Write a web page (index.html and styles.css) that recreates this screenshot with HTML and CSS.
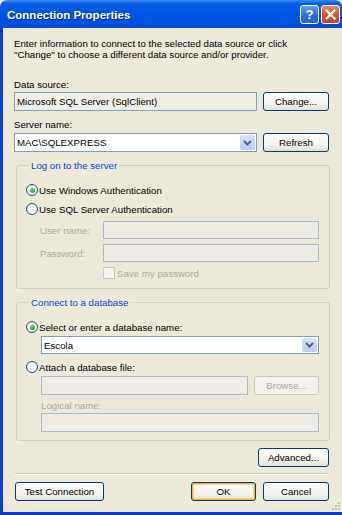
FILE: index.html
```html
<!DOCTYPE html>
<html lang="en">
<head>
    <meta charset="UTF-8">
    <title>Connection Properties</title>
    <link rel="stylesheet" href="styles.css">
</head>
<body>
    <div class="window">
        <div class="titlebar">
            <span class="title">Connection Properties</span>
            <div class="caption-buttons">
                <span class="cap-btn help">?</span>
                <span class="cap-btn close">
                    <svg width="11" height="11" viewBox="0 0 11 11"><path d="M1.5 1.5 L9.5 9.5 M9.5 1.5 L1.5 9.5" stroke="#fff" stroke-width="2.2" stroke-linecap="square"/></svg>
                </span>
            </div>
        </div>

        <div class="client">
            <p class="intro">Enter information to connect to the selected data source or click<br>"Change" to choose a different data source and/or provider.</p>

            <div class="label first">Data source:</div>
            <div class="row">
                <div class="textbox readonly">Microsoft SQL Server (SqlClient)</div>
                <button class="btn side">Change...</button>
            </div>

            <div class="label">Server name:</div>
            <div class="row">
                <div class="textbox combo">
                    <span class="value">MAC\SQLEXPRESS</span>
                    <span class="drop"><svg width="9" height="6" viewBox="0 0 9 6"><path d="M1 1 L4.5 4.5 L8 1" fill="none" stroke="#4d6185" stroke-width="2"/></svg></span>
                </div>
                <button class="btn side">Refresh</button>
            </div>

            <fieldset class="group logon">
                <legend>Log on to the server</legend>
                <div class="option">
                    <span class="radio checked"></span>
                    <span>Use Windows Authentication</span>
                </div>
                <div class="option second">
                    <span class="radio"></span>
                    <span>Use SQL Server Authentication</span>
                </div>
                <div class="field">
                    <span class="field-label disabled">User name:</span>
                    <div class="textbox disabled-box"></div>
                </div>
                <div class="field">
                    <span class="field-label disabled">Password:</span>
                    <div class="textbox disabled-box"></div>
                </div>
                <div class="check-row">
                    <span class="checkbox"></span>
                    <span class="disabled">Save my password</span>
                </div>
            </fieldset>

            <fieldset class="group database">
                <legend>Connect to a database</legend>
                <div class="option">
                    <span class="radio checked"></span>
                    <span>Select or enter a database name:</span>
                </div>
                <div class="indent">
                    <div class="textbox combo small">
                        <span class="value">Escola</span>
                        <span class="drop"><svg width="9" height="6" viewBox="0 0 9 6"><path d="M1 1 L4.5 4.5 L8 1" fill="none" stroke="#4d6185" stroke-width="2"/></svg></span>
                    </div>
                </div>
                <div class="option attach">
                    <span class="radio"></span>
                    <span>Attach a database file:</span>
                </div>
                <div class="indent row file-row">
                    <div class="textbox disabled-box"></div>
                    <button class="btn browse" disabled>Browse...</button>
                </div>
                <div class="indent logical disabled">Logical name:</div>
                <div class="indent logical-box">
                    <div class="textbox disabled-box"></div>
                </div>
            </fieldset>

            <div class="advanced-row">
                <button class="btn advanced">Advanced...</button>
            </div>

            <div class="separator"></div>

            <div class="footer">
                <button class="btn test">Test Connection</button>
                <div class="footer-right">
                    <button class="btn ok">OK</button>
                    <button class="btn side">Cancel</button>
                </div>
            </div>

            <svg class="grip" width="10" height="10" viewBox="0 0 10 10">
                <rect x="7" y="1" width="2" height="2" fill="#c5c2b2"/>
                <rect x="4" y="4" width="2" height="2" fill="#c5c2b2"/>
                <rect x="7" y="4" width="2" height="2" fill="#c5c2b2"/>
                <rect x="1" y="7" width="2" height="2" fill="#c5c2b2"/>
                <rect x="4" y="7" width="2" height="2" fill="#c5c2b2"/>
                <rect x="7" y="7" width="2" height="2" fill="#c5c2b2"/>
            </svg>
        </div>
    </div>
</body>
</html>
```

FILE: styles.css
```css
body {
    margin: 0;
    font-family: 'Liberation Sans', Arial, sans-serif;
    font-size: 9.7px;
    line-height: 11px;
    color: #000;
    background-color: #ece9d8;
}
.window {
    width: 342px;
    height: 515px;
    display: flex;
    flex-direction: column;
    overflow: hidden;
}
.titlebar {
    height: 28px;
    flex-shrink: 0;
    display: flex;
    align-items: center;
    justify-content: space-between;
    padding: 0 2px 0 7px;
    box-sizing: border-box;
    border-radius: 7px 7px 0 0;
    background: linear-gradient(to bottom, #3b8cf5 0%, #0a5fe6 12%, #0055e3 45%, #0052df 80%, #0448d2 100%);
}
.title {
    color: #fff;
    font-weight: bold;
    font-size: 11.5px;
    text-shadow: 1px 1px 0 #0a2a8a;
    margin-top: 2px;
}
.caption-buttons {
    display: flex;
    gap: 2px;
    margin-top: 1px;
}
.cap-btn {
    width: 19px;
    height: 19px;
    box-sizing: border-box;
    border: 1px solid #fff;
    border-radius: 3px;
    display: flex;
    align-items: center;
    justify-content: center;
    color: #fff;
    font-weight: bold;
    font-size: 13px;
}
.help {
    background: linear-gradient(to bottom, #5c9cfb, #2966e8 60%, #2a62de);
}
.close {
    background: linear-gradient(to bottom, #e8896a, #d6502e 55%, #c8401e);
}
.client {
    flex: 1;
    position: relative;
    border-left: 3px solid #0a3ad8;
    border-bottom: 3px solid #0a3ad8;
    padding: 10px 13px 0 11px;
    background-color: #ece9d8;
}
.intro {
    margin: 0;
}
.label {
    margin-top: 8px;
}
.label.first {
    margin-top: 19px;
}
.row {
    display: flex;
    gap: 6px;
    margin-top: 2px;
}
.label + .row {
    margin-top: 3px;
}
.label.first + .row {
    margin-top: 2px;
}
.textbox {
    flex: 1;
    height: 19px;
    box-sizing: border-box;
    border: 1px solid #7f9db9;
    background: #fff;
    padding: 0 2px;
    display: flex;
    align-items: center;
}
.textbox.readonly {
    background: #f0efe6;
}
.textbox.disabled-box {
    background: #efede3;
    border-color: #a5b9d0;
}
.combo {
    justify-content: space-between;
    padding-right: 1px;
}
.drop {
    width: 15px;
    height: 15px;
    display: flex;
    align-items: center;
    justify-content: center;
    background: linear-gradient(to bottom, #d6e2fd, #b9cbf6);
    border-radius: 2px;
}
.combo.small {
    height: 18px;
}
.combo.small .drop {
    height: 14px;
}
.btn {
    height: 19px;
    box-sizing: border-box;
    border: 1px solid #003c74;
    border-radius: 3px;
    background: linear-gradient(to bottom, #ffffff, #f4f3ee 60%, #e3e1d6);
    font-family: inherit;
    font-size: inherit;
    color: #000;
    padding: 0;
}
.btn.side {
    width: 66px;
}
.group {
    margin: 8px -1px 0 2px;
    border: 1px solid #d0d0bf;
    border-radius: 3px;
    padding: 12px 10px 8px 9px;
}
.logon {
    padding-bottom: 9px;
}
.group legend {
    color: #0046d5;
    padding: 0 2px;
    margin-left: 3px;
}
.option {
    height: 14px;
    display: flex;
    align-items: center;
    gap: 1px;
}
.option.second {
    margin-top: 5px;
}
.radio {
    width: 12px;
    height: 12px;
    box-sizing: border-box;
    border: 1px solid #1c5180;
    border-radius: 50%;
    background: radial-gradient(circle at 60% 60%, #fff 30%, #e4e2d8 100%);
    display: flex;
    align-items: center;
    justify-content: center;
}
.radio.checked::after {
    content: "";
    width: 5px;
    height: 5px;
    border-radius: 50%;
    background: radial-gradient(circle at 40% 40%, #6ddb6d, #21a121 70%);
}
.field {
    display: flex;
    align-items: center;
    margin: 5px 0 0 14px;
}
.field-label {
    width: 63px;
}
.field .textbox {
    height: 18px;
}
.disabled {
    color: #aca899;
}
.check-row {
    display: flex;
    align-items: center;
    gap: 2px;
    height: 12px;
    margin: 5px 0 0 77px;
}
.checkbox {
    width: 12px;
    height: 12px;
    box-sizing: border-box;
    border: 1px solid #cac8bb;
    background: #f5f4ee;
}
.database {
    margin-top: 8px;
}
.indent {
    margin-left: 15px;
}
.indent .combo {
    margin-top: 2px;
}
.option.attach {
    margin-top: 6px;
}
.file-row {
    margin-top: 2px;
}
.browse {
    width: 65px;
    height: 19px;
    border-color: #c9c7ba;
    color: #aca899;
    background: #f3f2ea;
}
.logical {
    margin-top: 5px;
}
.logical-box {
    display: flex;
    margin-top: 2px;
}
.advanced-row {
    display: flex;
    justify-content: flex-end;
    margin-top: 7px;
}
.advanced {
    width: 71px;
}
.separator {
    margin-top: 6px;
    height: 1px;
    background: #d0d0bf;
    border-bottom: 1px solid #fff;
}
.footer {
    display: flex;
    justify-content: space-between;
    margin-top: 7px;
    padding-left: 1px;
}
.footer-right {
    display: flex;
    gap: 7px;
}
.test {
    width: 89px;
}
.ok {
    width: 65px;
    box-shadow: inset 0 0 0 1px #f8b330, inset 0 0 0 2px #fcd48a;
}
.grip {
    position: absolute;
    right: 1px;
    bottom: 1px;
}
```
